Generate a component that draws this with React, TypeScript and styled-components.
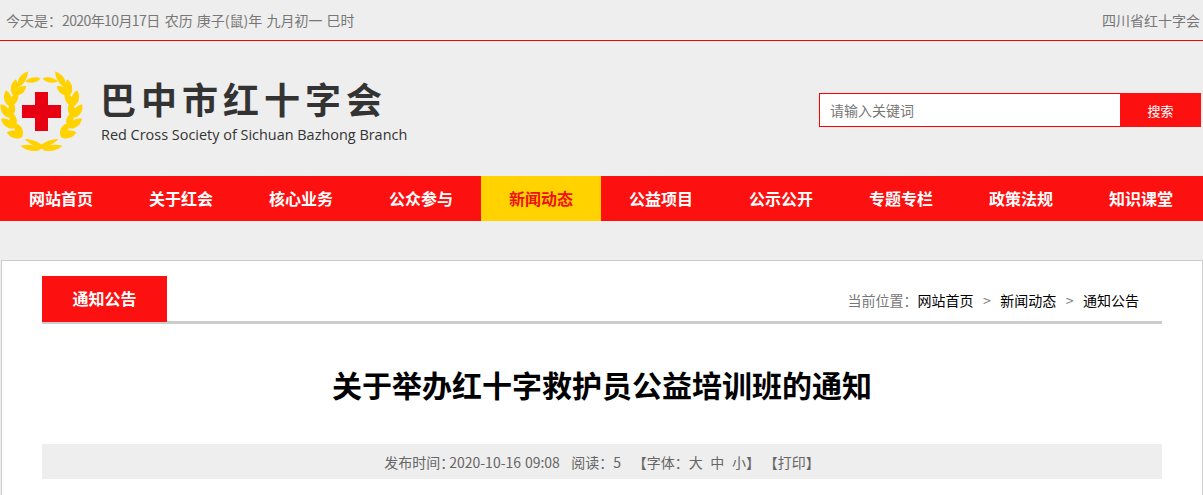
import React from "react";
import styled, { createGlobalStyle } from "styled-components";

const CJK = `"Noto Sans CJK SC", "Open Sans", sans-serif`;
const RED = "#fc1010";

const Global = createGlobalStyle`
  html, body { margin: 0; padding: 0; height: 495px; overflow: hidden; background: #eeeeee; }
  body { font-family: "Open Sans", "Noto Sans CJK SC", sans-serif; }
  * { box-sizing: border-box; }
  a { text-decoration: none; color: inherit; }
`;

const Page = styled.div`
  width: 1203px;
  height: 495px;
  overflow: hidden;
`;
const TopBar = styled.div`
  height: 41px;
  border-bottom: 1px solid #ff0000;
  padding: 0 3px 0 6px;
  display: flex;
  justify-content: space-between;
  align-items: center;
  font-size: 14px;
  color: #777;
  font-family: ${CJK};
  word-spacing: 1px;
`;
const Digits = styled.span`
  letter-spacing: -0.6px;
  margin-right: 1px;
`;
const Header = styled.header`
  height: 135px;
  display: flex;
  align-items: center;
  justify-content: space-between;
  padding: 4px 2px 0 0;
`;
const Brand = styled.div`
  display: flex;
  align-items: center;
  gap: 17px;
`;
const BrandText = styled.div`
  display: flex;
  flex-direction: column;
  gap: 6px;
`;
const BrandName = styled.div`
  font-family: ${CJK};
  font-size: 36px;
  line-height: 44px;
  font-weight: 700;
  letter-spacing: 5px;
  color: #333;
  margin: -1px 0 0 -1px;
`;
const BrandSub = styled.div`
  font-family: "Open Sans", sans-serif;
  font-size: 14.45px;
  line-height: 18px;
  color: #333;
`;
const Search = styled.form`
  display: flex;
  width: 382px;
  height: 34px;
  margin-bottom: 1px;
`;
const SearchInput = styled.input`
  width: 301px;
  height: 34px;
  border: 1px solid #ff0000;
  border-right: none;
  background: #fff;
  padding: 0 10px;
  font-family: ${CJK};
  font-size: 14px;
  outline: none;
  &::placeholder { color: #777; opacity: 1; }
`;
const SearchButton = styled.button`
  width: 81px;
  height: 34px;
  border: none;
  background: ${RED};
  color: #fff;
  font-family: ${CJK};
  font-size: 13px;
  padding: 0;
`;
const Nav = styled.nav`
  height: 45px;
  background: ${RED};
  display: grid;
  grid-template-columns: repeat(10, 120px);
  padding-left: 1px;
`;
const NavItem = styled.a<{ $active?: boolean }>`
  display: flex;
  align-items: center;
  justify-content: center;
  padding-bottom: 2px;
  font-family: ${CJK};
  font-size: 16px;
  font-weight: 700;
  color: ${(p) => (p.$active ? "#f01010" : "#fff")};
  background: ${(p) => (p.$active ? "#ffd200" : "transparent")};
`;
const Card = styled.main`
  margin: 39px 0 0 1px;
  background: #fff;
  border: 1px solid #ccc;
  height: 300px;
  padding: 15px 40px 0;
`;
const SectionHead = styled.div`
  height: 48px;
  border-bottom: 3px solid #ccc;
  display: flex;
  justify-content: space-between;
  align-items: flex-start;
`;
const Tab = styled.div`
  width: 125px;
  height: 46px;
  background: ${RED};
  color: #fff;
  font-family: ${CJK};
  font-size: 16px;
  font-weight: 700;
  padding-bottom: 2px;
  display: flex;
  align-items: center;
  justify-content: center;
`;
const Crumbs = styled.div`
  display: flex;
  align-items: center;
  height: 48px;
  padding: 0 23px 0 0;
  font-family: ${CJK};
  font-size: 14px;
  color: #777;
`;
const Crumb = styled.a`
  color: #000;
`;
const CrumbSep = styled.span`
  margin: 0 9.5px;
`;
const Title = styled.h1`
  margin: 0;
  height: 120px;
  display: flex;
  align-items: center;
  justify-content: center;
  font-family: ${CJK};
  font-size: 30px;
  font-weight: 700;
  color: #000;
`;
const Meta = styled.div`
  height: 35px;
  background: #eee;
  display: flex;
  align-items: center;
  justify-content: center;
  font-family: ${CJK};
  font-size: 14px;
  color: #666;
  white-space: pre;
  word-spacing: 0.7px;
`;
const MetaLabel = styled.span`
  margin-right: -5px;
`;

const LEAF = "M0 0 C4 -5 11 -5.5 16 0 C11 4.5 4 4.5 0 0Z";

function Logo() {
  // Pairs of leaves set along the arc of the wreath, mirrored left and right.
  const pairs = [36, 57, 78, 99, 120];
  return (
    <svg width="84" height="84" viewBox="0 69 84 84" aria-hidden="true">
      <g fill="#ffd200">
        {[1, -1].map((s) => (
          <g key={s} transform={`translate(41.5 111) scale(${s} 1)`}>
            {pairs.map((a) => {
              const r = (a * Math.PI) / 180;
              const x = 33 * Math.sin(r);
              const y = 32 * Math.cos(r);
              return (
                <g key={a} transform={`translate(${x.toFixed(1)} ${y.toFixed(1)})`}>
                  <path d={LEAF} transform={`rotate(${-a + 20})`} />
                  <path d={LEAF} transform={`rotate(${-a - 26})`} />
                </g>
              );
            })}
            {/* crown of the wreath */}
            <path d="M1 -32.5 C5 -35 12 -34 16.5 -29.5 C11 -27 5 -28 1 -32.5Z" />
            <path d="M23 -23.5 C17 -27 14 -33 13.5 -39.5 C21 -37 26 -31 23 -23.5Z" />
            {/* foot of the wreath */}
            <path d="M-6 38.5 C2 38 10 35 17 28 C8 28 1 32 -6 38.5Z" />
            <path d="M1 39 C7 41 15 40 21 35 C14 32.5 6 34 1 39Z" />
          </g>
        ))}
      </g>
      <path fill="#e60012" d="M35 92h13v13h13v13H48v13H35v-13H22v-13h13z" />
    </svg>
  );
}

const navItems = ["网站首页", "关于红会", "核心业务", "公众参与", "新闻动态", "公益项目", "公示公开", "专题专栏", "政策法规", "知识课堂"];

export default function App() {
  return (
    <Page>
      <Global />
      <TopBar>
        <span>
          今天是：<Digits>2020年10月17日</Digits> 农历 庚子(鼠)年 九月初一 巳时
        </span>
        <span>四川省红十字会</span>
      </TopBar>
      <Header>
        <Brand>
          <Logo />
          <BrandText>
            <BrandName>巴中市红十字会</BrandName>
            <BrandSub>Red Cross Society of Sichuan Bazhong Branch</BrandSub>
          </BrandText>
        </Brand>
        <Search onSubmit={(e) => e.preventDefault()}>
          <SearchInput placeholder="请输入关键词" />
          <SearchButton type="submit">搜索</SearchButton>
        </Search>
      </Header>
      <Nav>
        {navItems.map((n) => (
          <NavItem key={n} $active={n === "新闻动态"}>{n}</NavItem>
        ))}
      </Nav>
      <Card>
        <SectionHead>
          <Tab>通知公告</Tab>
          <Crumbs>
            当前位置：<Crumb>网站首页</Crumb>
            <CrumbSep>&gt;</CrumbSep>
            <Crumb>新闻动态</Crumb>
            <CrumbSep>&gt;</CrumbSep>
            <Crumb>通知公告</Crumb>
          </Crumbs>
        </SectionHead>
        <Title>关于举办红十字救护员公益培训班的通知</Title>
        <Meta>
          <MetaLabel>发布时间：</MetaLabel>2020-10-16 09:08   阅读：5   【字体：大  中  小】 【打印】
        </Meta>
      </Card>
    </Page>
  );
}
